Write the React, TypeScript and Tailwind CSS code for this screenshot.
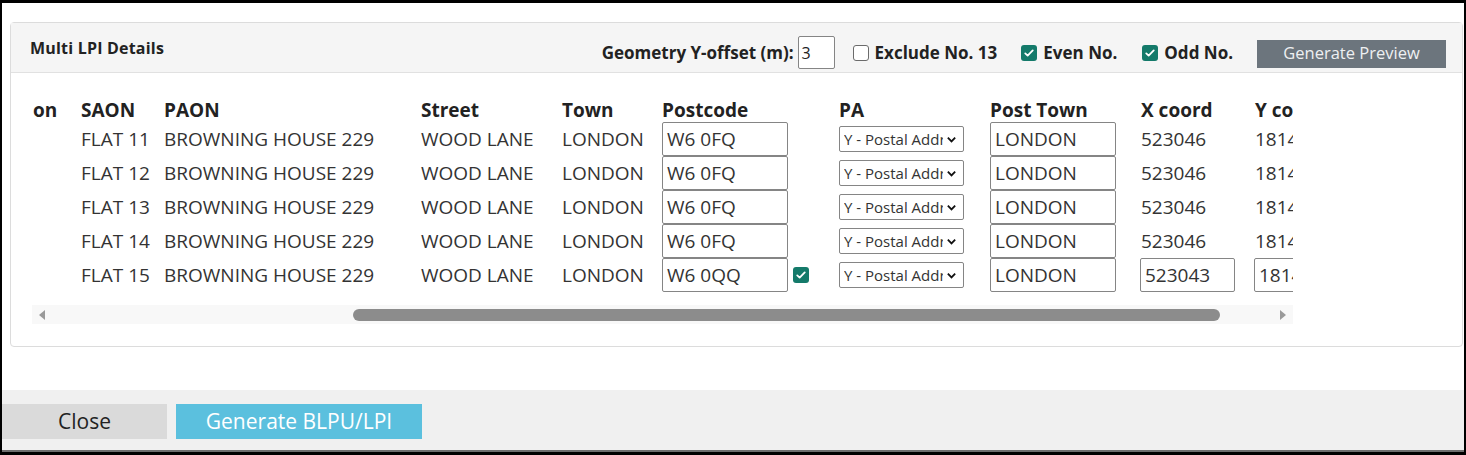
import { FC } from 'react'

type Row = {
    saon: string
    paon: string
    street: string
    town: string
    postcode: string
    postTown: string
    x: string
    y: string
    edited?: boolean
}

const rows: Row[] = [
    { saon: 'FLAT 11', paon: 'BROWNING HOUSE 229', street: 'WOOD LANE', town: 'LONDON', postcode: 'W6 0FQ', postTown: 'LONDON', x: '523046', y: '181462' },
    { saon: 'FLAT 12', paon: 'BROWNING HOUSE 229', street: 'WOOD LANE', town: 'LONDON', postcode: 'W6 0FQ', postTown: 'LONDON', x: '523046', y: '181462' },
    { saon: 'FLAT 13', paon: 'BROWNING HOUSE 229', street: 'WOOD LANE', town: 'LONDON', postcode: 'W6 0FQ', postTown: 'LONDON', x: '523046', y: '181462' },
    { saon: 'FLAT 14', paon: 'BROWNING HOUSE 229', street: 'WOOD LANE', town: 'LONDON', postcode: 'W6 0FQ', postTown: 'LONDON', x: '523046', y: '181462' },
    { saon: 'FLAT 15', paon: 'BROWNING HOUSE 229', street: 'WOOD LANE', town: 'LONDON', postcode: 'W6 0QQ', postTown: 'LONDON', x: '523043', y: '181459', edited: true },
]

const Tick: FC<{ checked: boolean }> = ({ checked }) =>
    checked ? (
        <span className="w-4 h-4 shrink-0 rounded-[3px] bg-[#147a6a] flex items-center justify-center">
            <svg viewBox="0 0 16 16" className="w-3 h-3">
                <path d="M3 8.5l3.2 3L13 4.5" fill="none" stroke="white" strokeWidth="2.4" strokeLinecap="round" strokeLinejoin="round" />
            </svg>
        </span>
    ) : (
        <span className="block w-4 h-4 shrink-0 rounded-[3px] border border-[#6b6b6b] bg-white"></span>
    )

const TextBox: FC<{ value: string; width: string }> = ({ value, width }) => (
    <div className={`${width} h-[34px] shrink-0 border border-[#858585] rounded-[2px] bg-white pl-[4px] flex items-center overflow-hidden whitespace-nowrap`}>
        {value}
    </div>
)

const PaSelect: FC = () => (
    <div className="w-[125px] h-[26px] border border-[#858585] rounded-[2px] bg-white flex items-center pl-[4px] pr-[6px] text-[15px]">
        <span className="flex-1 overflow-hidden whitespace-nowrap">Y - Postal Address</span>
        <svg viewBox="0 0 12 12" className="w-[11px] h-[11px] ml-[3px] shrink-0">
            <path d="M2 4l4 4 4-4" fill="none" stroke="#111" strokeWidth="2" />
        </svg>
    </div>
)

export default function App() {
    return (
        <div
            className="w-[1466px] h-[455px] bg-black pt-[3px] px-[2px] pb-[3px] text-[#333]"
            style={{ fontFamily: '"Open Sans", "Noto Sans", sans-serif' }}
        >
            <div className="h-full bg-white flex flex-col">
                <div className="flex-1 pt-[19px] pl-[8px] pr-[1px]">
                    <div className="h-[325px] border border-[#dcdcdc] rounded-[4px] flex flex-col">
                        {/* card header */}
                        <div className="h-[50px] bg-[#f5f5f5] border-b border-[#e1e1e1] flex items-start pl-[19px] pr-[16px]">
                            <span className="mt-[14px] text-[16px] leading-[22px] font-bold text-[#222] tracking-[0.2px]">
                                Multi LPI Details
                            </span>
                            <div className="ml-auto mt-[13px] flex items-center text-[17px] font-bold text-[#222]">
                                <span>Geometry Y-offset (m):</span>
                                <div className="ml-[4px] w-[37px] h-[33px] border border-[#858585] rounded-[2px] bg-white pl-[3px] flex items-center font-normal text-[16px]">
                                    3
                                </div>
                                <span className="ml-[18px] mr-[6px]"><Tick checked={false} /></span>
                                <span>Exclude No. 13</span>
                                <span className="ml-[24px] mr-[6px]"><Tick checked={true} /></span>
                                <span>Even No.</span>
                                <span className="ml-[25px] mr-[6px]"><Tick checked={true} /></span>
                                <span>Odd No.</span>
                                <button className="ml-[24px] mt-[2px] w-[189px] h-[28px] bg-[#6c757d] text-[#eef0f2] font-normal text-[16.5px]">
                                    Generate Preview
                                </button>
                            </div>
                        </div>

                        {/* table, scrolled sideways */}
                        <div className="pl-[21px] pt-[25px]">
                            <div className="w-[1261px] overflow-hidden">
                                <div className="flex h-[24px] items-center text-[19px] font-bold text-[#222] whitespace-nowrap">
                                    <div className="w-[49px] shrink-0 pl-[1px]">on</div>
                                    <div className="w-[83px] shrink-0">SAON</div>
                                    <div className="w-[257px] shrink-0">PAON</div>
                                    <div className="w-[141px] shrink-0">Street</div>
                                    <div className="w-[100px] shrink-0">Town</div>
                                    <div className="w-[177px] shrink-0">Postcode</div>
                                    <div className="w-[151px] shrink-0">PA</div>
                                    <div className="w-[151px] shrink-0">Post Town</div>
                                    <div className="w-[114px] shrink-0">X coord</div>
                                    <div className="w-[120px] shrink-0">Y coord</div>
                                </div>
                                {rows.map((r, i) => (
                                    <div key={i} className="flex h-[34px] items-center text-[19px] whitespace-nowrap">
                                        <div className="w-[49px] shrink-0"></div>
                                        <div className="w-[83px] shrink-0">{r.saon}</div>
                                        <div className="w-[257px] shrink-0">{r.paon}</div>
                                        <div className="w-[141px] shrink-0">{r.street}</div>
                                        <div className="w-[100px] shrink-0">{r.town}</div>
                                        <div className="w-[177px] shrink-0 flex items-center">
                                            <TextBox value={r.postcode} width="w-[126px]" />
                                            {r.edited && (
                                                <span className="ml-[5px]"><Tick checked={true} /></span>
                                            )}
                                        </div>
                                        <div className="w-[151px] shrink-0"><PaSelect /></div>
                                        <div className="w-[151px] shrink-0"><TextBox value={r.postTown} width="w-[126px]" /></div>
                                        {r.edited ? (
                                            <>
                                                <div className="w-[114px] shrink-0 -ml-[1px] mr-[1px]"><TextBox value={r.x} width="w-[95px]" /></div>
                                                <div className="w-[120px] shrink-0 -ml-[1px]"><TextBox value={r.y} width="w-[95px]" /></div>
                                            </>
                                        ) : (
                                            <>
                                                <div className="w-[114px] shrink-0">{r.x}</div>
                                                <div className="w-[120px] shrink-0">{r.y}</div>
                                            </>
                                        )}
                                    </div>
                                ))}
                                {/* horizontal scrollbar */}
                                <div className="mt-[13px] h-[19px] bg-[#f8f8f8] flex items-center px-[6px]">
                                    <svg viewBox="0 0 8 10" className="w-[8px] h-[10px] shrink-0">
                                        <path d="M7 0L1 5l6 5z" fill="#9a9a9a" />
                                    </svg>
                                    <div className="ml-[307px] w-[867px] h-[12px] rounded-full bg-[#8c8c8c]"></div>
                                    <svg viewBox="0 0 8 10" className="ml-auto w-[8px] h-[10px] shrink-0">
                                        <path d="M1 0l6 5-6 5z" fill="#9a9a9a" />
                                    </svg>
                                </div>
                            </div>
                        </div>
                    </div>
                </div>
                <div className="h-[62px] bg-[#f0f0f0] border-b-[2px] border-[#6e6e6e] flex items-start pt-[14px] gap-[9px] text-[21px]">
                    <button className="w-[165px] h-[35px] bg-[#dadada] text-[#222]">Close</button>
                    <button className="w-[246px] h-[35px] bg-[#5bc0de] text-white">Generate BLPU/LPI</button>
                </div>
            </div>
        </div>
    )
}
